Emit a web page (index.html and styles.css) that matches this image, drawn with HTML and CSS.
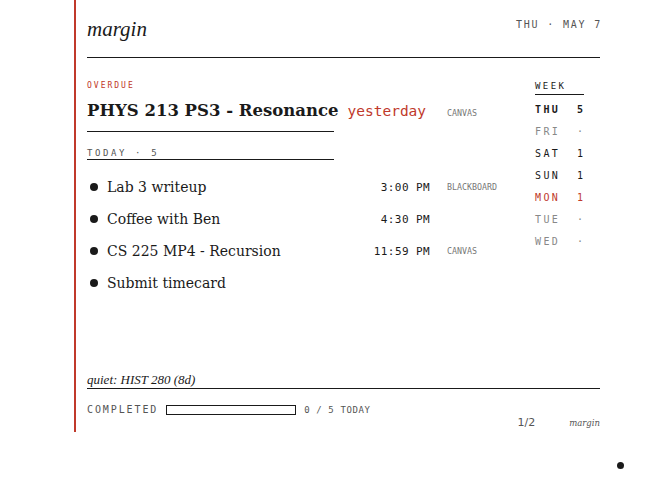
FILE: index.html
```html
<!DOCTYPE html>
<html lang="en">
<head>
    <meta charset="UTF-8">
    <meta name="viewport" content="width=device-width, initial-scale=1.0">
    <title>margin</title>
    <link rel="stylesheet" href="styles.css">
</head>
<body>

<div class="page">
    <div class="topbar">
        <span class="brand">margin</span>
        <span class="date">THU · MAY 7</span>
    </div>

    <div class="main">
        <div class="left">
            <div class="label overdue">OVERDUE</div>
            <div class="hero">
                <h1>PHYS 213 PS3 - Resonance</h1>
                <span class="when">yesterday</span>
                <span class="src">CANVAS</span>
            </div>
            <div class="rule"></div>

            <div class="label today">TODAY · 5</div>
            <div class="rule"></div>

            <ul class="tasks">
                <li><span class="dot"></span><span class="name">Lab 3 writeup</span><span class="time">3:00 PM</span><span class="src">BLACKBOARD</span></li>
                <li><span class="dot"></span><span class="name">Coffee with Ben</span><span class="time">4:30 PM</span><span class="src"></span></li>
                <li><span class="dot"></span><span class="name">CS 225 MP4 - Recursion</span><span class="time">11:59 PM</span><span class="src">CANVAS</span></li>
                <li><span class="dot"></span><span class="name">Submit timecard</span><span class="time"></span><span class="src"></span></li>
            </ul>
        </div>

        <div class="week">
            <div class="week-title">WEEK</div>
            <div class="day now"><span>THU</span><span>5</span></div>
            <div class="day empty"><span>FRI</span><span>·</span></div>
            <div class="day"><span>SAT</span><span>1</span></div>
            <div class="day"><span>SUN</span><span>1</span></div>
            <div class="day late"><span>MON</span><span>1</span></div>
            <div class="day empty"><span>TUE</span><span>·</span></div>
            <div class="day empty"><span>WED</span><span>·</span></div>
        </div>
    </div>

    <div class="quiet">quiet: HIST 280 (8d)</div>

    <div class="progress">
        <span class="label">COMPLETED</span>
        <span class="bar"></span>
        <span class="count">0 / 5 TODAY</span>
    </div>

    <div class="footer">
        <span class="pages">1/2</span>
        <span class="mark">margin</span>
    </div>
</div>

<div class="cursor"></div>

</body>
</html>
```

FILE: styles.css
```css
body {
    margin: 0px;
    padding: 0px;
    background-color: white;
    color: #1a1a1a;
    font-family: "DejaVu Serif", serif;
}
.page {
    margin-left: 74px;
    width: 513px;
    height: 432px;
    border-left: 2px solid #c0392b;
    padding-left: 11px;
    display: flex;
    flex-direction: column;
}
.topbar {
    display: flex;
    justify-content: space-between;
    align-items: flex-end;
    height: 57px;
    border-bottom: 1px solid #1a1a1a;
}
.brand {
    font-family: "Liberation Serif", serif;
    font-style: italic;
    font-size: 21px;
    margin-bottom: 15px;
}
.date {
    font-family: "DejaVu Sans Mono", monospace;
    font-size: 10px;
    letter-spacing: 1.8px;
    color: #555;
    margin-bottom: 27px;
    margin-right: -2px;
}
.main {
    display: flex;
    justify-content: space-between;
}
.left {
    width: 413px;
}
.label {
    font-family: "DejaVu Sans Mono", monospace;
    font-size: 9px;
    letter-spacing: 2.6px;
    color: #555;
}
.overdue {
    color: #c0392b;
    font-size: 8px;
    letter-spacing: 2px;
    margin-top: 23px;
}
.hero {
    display: flex;
    align-items: baseline;
    margin-top: 8px;
}
.hero h1 {
    margin: 0px;
    font-size: 16.5px;
    line-height: 26px;
    font-weight: bold;
    white-space: nowrap;
}
.when {
    font-family: "DejaVu Sans Mono", monospace;
    font-size: 14.5px;
    color: #c0392b;
    margin-left: 9px;
    flex: 1;
}
.rule {
    width: 247px;
    border-bottom: 1px solid #1a1a1a;
}
.hero + .rule {
    margin-top: 7px;
}
.src {
    font-family: "DejaVu Sans Mono", monospace;
    font-size: 8.3px;
    color: #777;
    width: 53px;
    margin-left: 17px;
}
.today {
    margin-top: 16px;
    padding-bottom: 1px;
}
.tasks {
    list-style: none;
    margin: 11px 0px 0px 0px;
    padding: 0px;
}
.tasks li {
    display: flex;
    align-items: center;
    height: 32px;
}
.dot {
    width: 8px;
    height: 8px;
    border-radius: 50%;
    background-color: #1a1a1a;
    margin-left: 3px;
    margin-right: 9px;
}
.name {
    font-size: 14px;
    flex: 1;
}
.time {
    font-family: "DejaVu Sans Mono", monospace;
    font-size: 11px;
    letter-spacing: 0.4px;
    text-align: right;
}
.week {
    width: 49px;
    margin-top: 23px;
    margin-right: 16px;
}
.week-title {
    font-family: "DejaVu Sans Mono", monospace;
    font-size: 9px;
    letter-spacing: 2.4px;
    color: #1a1a1a;
    border-bottom: 1px solid #1a1a1a;
    padding-bottom: 3px;
    margin-bottom: 4px;
}
.day {
    display: flex;
    justify-content: space-between;
    font-family: "DejaVu Sans Mono", monospace;
    font-size: 10px;
    letter-spacing: 2.4px;
    height: 22px;
    line-height: 22px;
    color: #1a1a1a;
}
.day span:last-child {
    letter-spacing: 0px;
    margin-right: 1px;
}
.day.now {
    font-weight: bold;
}
.day.empty {
    color: #888;
}
.day.late {
    color: #c0392b;
}
.quiet {
    margin-top: auto;
    font-family: "Liberation Serif", serif;
    font-style: italic;
    font-size: 13px;
    border-bottom: 1px solid #1a1a1a;
    padding-bottom: 0px;
    margin-bottom: 15px;
}
.progress {
    display: flex;
    align-items: center;
    margin-bottom: 1px;
}
.progress .label {
    font-size: 10px;
    letter-spacing: 1.9px;
}
.bar {
    width: 128px;
    height: 8px;
    border: 1px solid #1a1a1a;
    margin-left: 8px;
    margin-right: 8px;
}
.count {
    font-family: "DejaVu Sans Mono", monospace;
    font-size: 9px;
    letter-spacing: 0.6px;
    color: #555;
}
.footer {
    display: flex;
    justify-content: flex-end;
    align-items: baseline;
    gap: 34px;
    margin-bottom: 3px;
}
.pages {
    font-family: "DejaVu Sans", sans-serif;
    font-size: 11px;
    color: #555;
}
.mark {
    font-style: italic;
    font-size: 8.5px;
    color: #555;
}
.cursor {
    position: absolute;
    left: 617px;
    top: 462px;
    width: 7px;
    height: 7px;
    border-radius: 50%;
    background-color: #1a1a1a;
}
```
